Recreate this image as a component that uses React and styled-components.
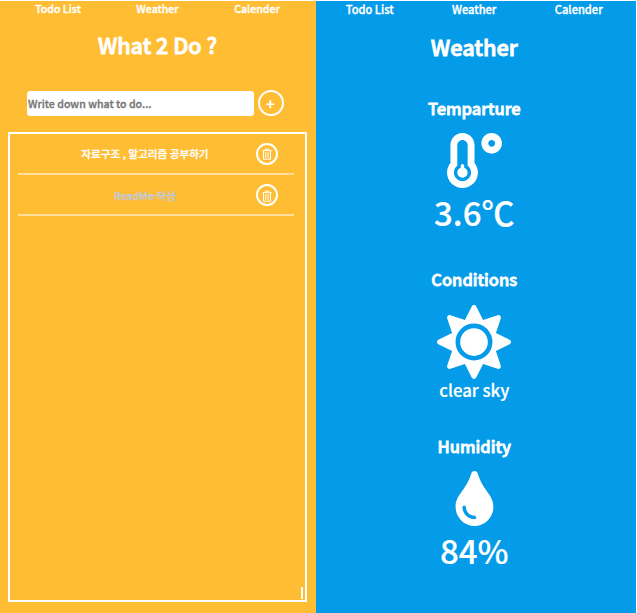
import React from "react";
import styled, { createGlobalStyle } from "styled-components";
import { FaSun, FaTint, FaTemperatureLow } from "react-icons/fa";

const GlobalStyle = createGlobalStyle`
  * { box-sizing: border-box; }
  body {
    margin: 0;
    background: #fff;
    overflow: hidden;
    font-family: "Noto Sans CJK KR", "Noto Sans", sans-serif;
    font-weight: 500;
  }
`;

const Page = styled.div`
  display: flex;
  width: 636px;
  height: 613px;
  padding-top: 1px;
`;

const Panel = styled.section`
  display: flex;
  flex-direction: column;
  align-items: center;
  width: ${(p) => p.$width}px;
  padding-right: ${(p) => p.$inset}px;
  background: ${(p) => p.$color};
  color: #fff;
`;

const Nav = styled.nav`
  display: grid;
  grid-template-columns: repeat(3, ${(p) => p.$column}px);
  justify-content: center;
  width: 100%;
  height: 18px;
  font-size: ${(p) => p.$size}px;
  line-height: ${(p) => p.$line}px;
  -webkit-text-stroke: 0.35px currentColor;
  text-align: center;
  white-space: nowrap;
`;

const Title = styled.h1`
  height: 36px;
  margin: ${(p) => p.$top}px 0 0;
  font-size: ${(p) => p.$size}px;
  font-weight: 500;
  line-height: 36px;
  -webkit-text-stroke: 0.9px currentColor;
  white-space: nowrap;
`;

const Form = styled.form`
  display: flex;
  align-items: center;
  gap: 4px;
  height: 26px;
  margin: 27px 0 0 -5px;
`;

const Input = styled.input`
  width: 227px;
  height: 25px;
  padding: 0 1.5px;
  border: 0;
  border-radius: 3px;
  background: #fff;
  font: 500 10.6px "Noto Sans CJK KR", sans-serif;
  outline: none;
  &::placeholder {
    color: #757575;
    opacity: 1;
    -webkit-text-stroke: 0.3px #757575;
  }
`;

const RoundButton = styled.button`
  display: flex;
  align-items: center;
  justify-content: center;
  flex: none;
  width: ${(p) => p.$size}px;
  height: ${(p) => p.$size}px;
  padding: 1px 0 0;
  border: 2px solid #fff;
  border-radius: 50%;
  background: transparent;
  color: #fff;
  font: 700 15px/20px "Noto Sans CJK KR", sans-serif;
`;

const List = styled.ul`
  display: flex;
  flex-direction: column;
  width: 299px;
  height: 470.5px;
  margin: 15.5px 0 0 -1px;
  padding: 0 11px 0 8px;
  border: 2px solid #fff;
  list-style: none;
`;

const Item = styled.li`
  display: grid;
  grid-template-columns: 1fr 22px;
  align-items: center;
  flex: none;
  height: 41px;
  padding: ${(p) => (p.$done ? 2 : 1)}px 16px 0 17px;
  border-bottom: 2px solid #ffdf9c;
  color: ${(p) => (p.$done ? "#c8c8c8" : "#fff")};
  font-size: 10.6px;
  -webkit-text-stroke: 0.3px currentColor;
  text-align: center;
  text-decoration: ${(p) => (p.$done ? "line-through" : "none")};
`;

const Caret = styled.span`
  width: 2px;
  height: 12px;
  margin: auto -9px 1px auto;
  background: #fff;
`;

const Metric = styled.section`
  display: flex;
  flex-direction: column;
  align-items: center;
  height: ${(p) => p.$height}px;
  margin-top: ${(p) => p.$top || 0}px;
`;

const MetricName = styled.h2`
  height: 26px;
  margin: 0;
  font-size: 16.5px;
  font-weight: 500;
  line-height: 25px;
  -webkit-text-stroke: 0.8px currentColor;
`;

const MetricIcon = styled.div`
  display: flex;
  margin-top: ${(p) => p.$top}px;
  font-size: ${(p) => p.$size}px;
`;

const Value = styled.div`
  height: ${(p) => p.$line}px;
  font-size: ${(p) => p.$size}px;
  line-height: ${(p) => p.$line}px;
  -webkit-text-stroke: 0.2px currentColor;
  white-space: nowrap;
`;

const links = ["Todo List", "Weather", "Calender"];
const todos = [
  { text: "자료구조 , 알고리즘 공부하기", done: false },
  { text: "ReadMe 작성", done: true },
];

function TrashIcon() {
  return (
    <svg width="10" height="12" viewBox="0 0 10 12" fill="none" stroke="currentColor">
      <path d="M0.3 2.6H9.7M3.4 2.4V1H6.6V2.4M1.5 3V11.2H8.5V3" />
      <path d="M3.4 4.3V9.8M5 4.3V9.8M6.6 4.3V9.8" strokeWidth="0.8" />
    </svg>
  );
}

function Navigation({ column, size, line }) {
  return (
    <Nav $column={column} $size={size} $line={line}>
      {links.map((link) => <span key={link}>{link}</span>)}
    </Nav>
  );
}

export default function App() {
  return (
    <>
      <GlobalStyle />
      <Page>
        <Panel $width={316} $inset={1} $color="#ffbd33">
          <Navigation column={99.5} size={10.6} line={16} />
          <Title $top={8} $size={21.6}>What 2 Do ?</Title>
          <Form>
            <Input placeholder="Write down what to do..." />
            <RoundButton type="button" $size={26}>+</RoundButton>
          </Form>
          <List>
            {todos.map((todo) => (
              <Item key={todo.text} $done={todo.done}>
                <span>{todo.text}</span>
                <RoundButton type="button" $size={22}><TrashIcon /></RoundButton>
              </Item>
            ))}
            <Caret />
          </List>
        </Panel>
        <Panel $width={320} $inset={3.5} $color="#049be8">
          <Navigation column={104.5} size={11.1} line={17} />
          <Title $top={10} $size={21.8}>Weather</Title>
          <Metric $top={31} $height={171}>
            <MetricName>Temparture</MetricName>
            <MetricIcon $top={11} $size={55}><FaTemperatureLow /></MetricIcon>
            <Value $size={33} $line={49}>3.6℃</Value>
          </Metric>
          <Metric $height={167}>
            <MetricName>Conditions</MetricName>
            <MetricIcon $top={12} $size={74}><FaSun /></MetricIcon>
            <Value $size={16.8} $line={23}>clear sky</Value>
          </Metric>
          <Metric $height={150}>
            <MetricName>Humidity</MetricName>
            <MetricIcon $top={11} $size={55}><FaTint /></MetricIcon>
            <Value $size={33} $line={48}>84%</Value>
          </Metric>
        </Panel>
      </Page>
    </>
  );
}
